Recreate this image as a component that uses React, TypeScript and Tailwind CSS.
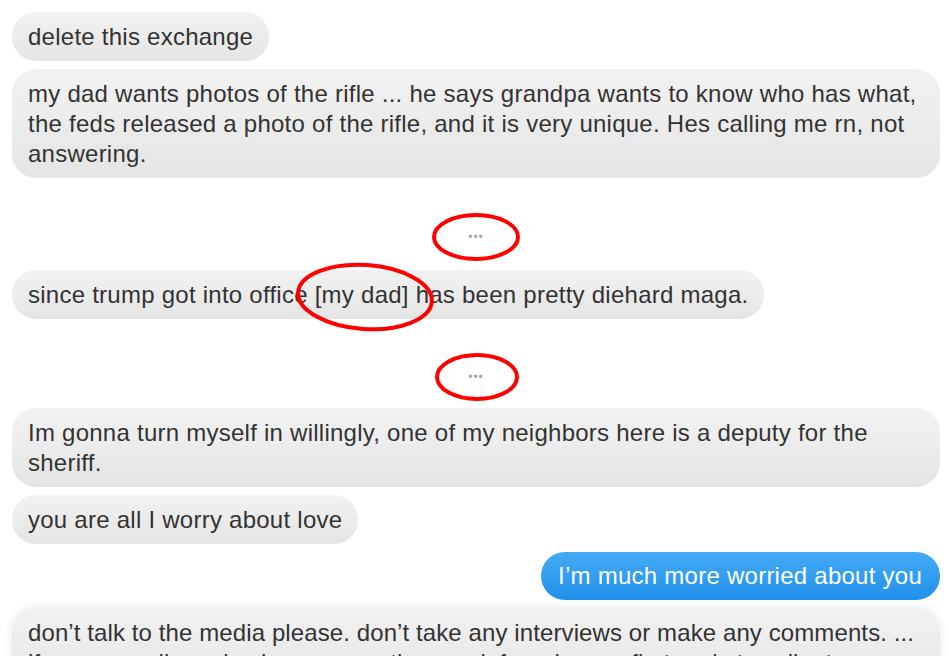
import React from "react";

const grayBubble =
  "rounded-[24px] bg-linear-to-b from-[#f2f2f2] to-[#e5e5e5] pl-[16px] pr-[16px] pt-[10px] pb-[9px] text-[24px] leading-[30px] tracking-[0.25px] text-[#333333]";

function Dots({ height, top }: { height: string; top: string }) {
  return (
    <div className={`flex w-full justify-center ${height} ${top}`}>
      <span className="relative text-[12px] leading-[14px] tracking-[1px] text-[#a8a8a8]">
        •••
      </span>
    </div>
  );
}

export default function App() {
  return (
    <div
      className="relative h-[656px] w-[950px] overflow-hidden bg-white"
      style={{ fontFamily: '"Liberation Sans", Arial, sans-serif' }}
    >
      <div className="flex flex-col items-start gap-2 pl-[12px] pr-[10px] pt-[12px]">
        <div className={grayBubble}>delete this exchange</div>

        <div className={`${grayBubble} self-stretch`}>
          <div>
            my dad wants photos of the rifle ... he says grandpa wants to know
            who has what,
          </div>
          <div>
            the feds released a photo of the rifle, and it is very unique. Hes
            calling me rn, not
          </div>
          <div>answering.</div>
        </div>

        <Dots height="h-[76px]" top="pt-[44px]" />

        <div className={grayBubble}>
          since trump got into office [my dad] has been pretty diehard maga.
        </div>

        <Dots height="h-[73px]" top="pt-[43px]" />

        <div className={`${grayBubble} self-stretch`}>
          <div>
            Im gonna turn myself in willingly, one of my neighbors here is a
            deputy for the
          </div>
          <div>sheriff.</div>
        </div>

        <div className={grayBubble}>you are all I worry about love</div>

        <div className="self-end rounded-[24px] bg-linear-to-b from-[#43abf6] to-[#1f90ea] pl-[17px] pr-[18px] pt-[9px] pb-[9px] text-[24px] leading-[30px] tracking-[0.25px] text-white">
          I’m much more worried about you
        </div>

        <div className="self-stretch whitespace-nowrap rounded-[24px] bg-linear-to-b from-[#f2f2f2] to-[#e5e5e5] pl-[16px] pr-[6px] pt-[10px] pb-[9px] text-[24px] leading-[30px] tracking-[0.1px] text-[#333333] shadow-[0_0_8px_rgba(0,0,0,0.10)]">
          <div>
            don’t talk to the media please. don’t take any interviews or make
            any comments. ...
          </div>
          <div>
            if anyone calls and asks you questions, ask for a lawyer first and
            stay silent
          </div>
        </div>
      </div>

      {/* red annotation circles drawn over the screenshot */}
      <svg
        className="pointer-events-none absolute left-0 top-0"
        width="950"
        height="656"
        viewBox="0 0 950 656"
      >
        <ellipse cx="476" cy="237" rx="42" ry="22" fill="none" stroke="#ff0000" strokeWidth="4" />
        <ellipse cx="477" cy="377" rx="40" ry="22" fill="none" stroke="#ff0000" strokeWidth="4" />
        <ellipse
          cx="365"
          cy="297"
          rx="67"
          ry="32"
          fill="none"
          stroke="#ff0000"
          strokeWidth="4"
          transform="rotate(4 365 297)"
        />
      </svg>
    </div>
  );
}
